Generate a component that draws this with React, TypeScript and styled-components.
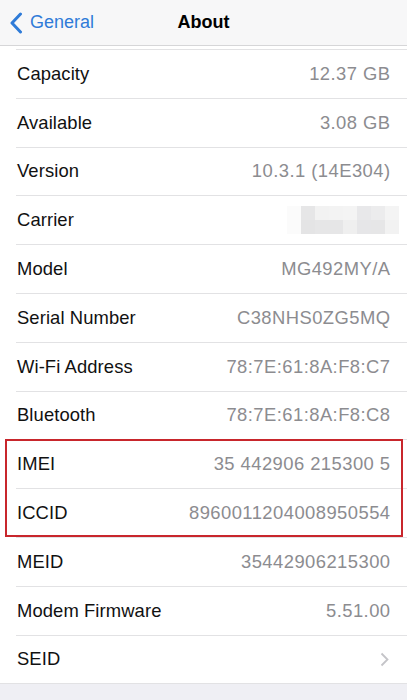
import styled, { createGlobalStyle } from 'styled-components'

const GlobalStyle = createGlobalStyle`
    html, body {
        margin: 0;
        padding: 0;
        background: #efeff4;
    }
    body {
        font-family: "Liberation Sans", Arial, sans-serif;
        -webkit-font-smoothing: antialiased;
    }
`

const Screen = styled.div`
    width: 407px;
    height: 700px;
    overflow: hidden;
    background: #efeff4;
`

const NavBar = styled.header`
    height: 45px;
    display: grid;
    grid-template-columns: 1fr auto 1fr;
    align-items: center;
    background: #f7f7f8;
    border-bottom: 1px solid #d6d6d8;
`

const BackButton = styled.div`
    display: flex;
    align-items: center;
    gap: 7px;
    padding-left: 9px;
    color: #2f7bd8;
    font-size: 18px;
`

const Title = styled.h1`
    margin: 0;
    font-size: 18px;
    font-weight: 700;
    color: #000;
`

const List = styled.div`
    background: #fff;
    padding-top: 3px;
`

const Row = styled.div`
    height: 48.8px;
    box-sizing: border-box;
    display: flex;
    align-items: center;
    justify-content: space-between;
    margin-left: 16px;
    padding-right: 17px;
    border-top: 1px solid #e2e2e4;
    font-size: 18.4px;
`

const Label = styled.span`
    color: #111;
    padding-left: 1px;
    letter-spacing: 0.1px;
`

const Value = styled.span`
    color: #8c8c90;
    letter-spacing: 0.45px;
    margin-right: -0.5px;
`

const Highlight = styled.div`
    position: relative;

    &::after {
        content: '';
        position: absolute;
        left: 5px;
        right: 4px;
        top: 0;
        bottom: 0;
        border: 2px solid #c8262c;
        pointer-events: none;
    }
`

const Pixelated = styled.div`
    display: grid;
    grid-template-columns: repeat(8, 14px);
    grid-template-rows: repeat(2, 14px);
    margin-right: -9px;
`

const Footer = styled.div`
    border-top: 1px solid #e2e2e4;
`

const blurCells = [
    '#fbfbfb', '#e6e6e7', '#f2f2f2', '#f3f3f3', '#f4f4f4', '#e8e8ea', '#ececed', '#f4f4f4',
    '#fbfbfb', '#e4e4e5', '#e6e6e7', '#e6e6e7', '#efefef', '#e6e6e8', '#e6e6e7', '#f2f2f2',
]

const rowsTop = [
    ['Capacity', '12.37 GB'],
    ['Available', '3.08 GB'],
    ['Version', '10.3.1 (14E304)'],
]

const rowsMid = [
    ['Model', 'MG492MY/A'],
    ['Serial Number', 'C38NHS0ZG5MQ'],
    ['Wi-Fi Address', '78:7E:61:8A:F8:C7'],
    ['Bluetooth', '78:7E:61:8A:F8:C8'],
]

const rowsMarked = [
    ['IMEI', '35 442906 215300 5'],
    ['ICCID', '8960011204008950554'],
]

const rowsBottom = [
    ['MEID', '35442906215300'],
    ['Modem Firmware', '5.51.00'],
]

function InfoRow({ label, value }: { label: string; value: string }) {
    return <Row>
        <Label>{label}</Label>
        <Value>{value}</Value>
    </Row>
}

export default function App() {
    return <Screen>
        <GlobalStyle />
        <NavBar>
            <BackButton>
                <svg width="14" height="22" viewBox="0 0 14 22">
                    <path d="M11.5 2 L3 11 L11.5 20" fill="none" stroke="#2f7bd8" strokeWidth="3" strokeLinecap="round" strokeLinejoin="round" />
                </svg>
                General
            </BackButton>
            <Title>About</Title>
            <div />
        </NavBar>
        <List>
            {rowsTop.map(([l, v]) => <InfoRow key={l} label={l} value={v} />)}
            <Row>
                <Label>Carrier</Label>
                <Pixelated>
                    {blurCells.map((c, i) => <div key={i} style={{ background: c }} />)}
                </Pixelated>
            </Row>
            {rowsMid.map(([l, v]) => <InfoRow key={l} label={l} value={v} />)}
            <Highlight>
                {rowsMarked.map(([l, v]) => <InfoRow key={l} label={l} value={v} />)}
            </Highlight>
            {rowsBottom.map(([l, v]) => <InfoRow key={l} label={l} value={v} />)}
            <Row>
                <Label>SEID</Label>
                <svg width="9" height="15" viewBox="0 0 9 15" style={{ marginRight: 1 }}>
                    <path d="M1.5 1.5 L7.5 7.5 L1.5 13.5" fill="none" stroke="#c4c4c8" strokeWidth="1.8" />
                </svg>
            </Row>
        </List>
        <Footer />
    </Screen>
}
